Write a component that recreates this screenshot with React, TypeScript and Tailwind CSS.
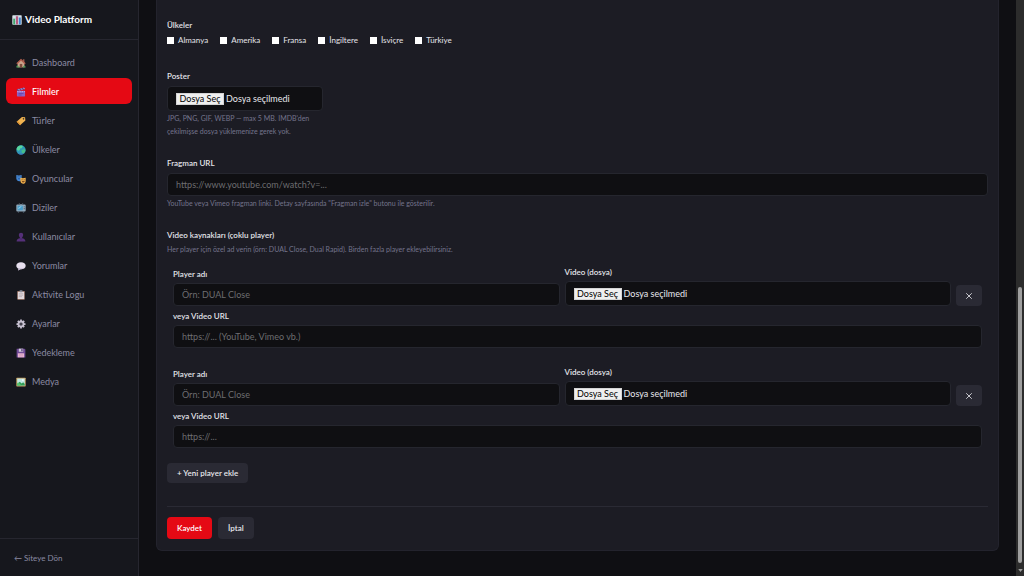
import { useState, type ReactNode } from "react";
import { X } from "lucide-react";

const icons: Record<string, ReactNode> = {
  chart: (
    <>
      <rect x="0.5" y="0.5" width="15" height="15" rx="1" fill="#d9e3ea" />
      <path d="M0.5 5.5h15M0.5 10.5h15M5.5 0.5v15M10.5 0.5v15" stroke="#aebfd0" strokeWidth="0.6" />
      <rect x="2" y="6" width="3" height="9" fill="#3fa66b" />
      <rect x="6.5" y="2" width="3" height="13" fill="#b6537a" />
      <rect x="11" y="4" width="3" height="11" fill="#3f86cf" />
    </>
  ),
  home: (
    <>
      <path d="M2.5 8h11v7h-11z" fill="#c9a58c" />
      <path d="M11 2h2.5v5H11z" fill="#9b5a4a" />
      <path d="M3 7 8 3l5 4v2H3z" fill="#c9a58c" />
      <path d="M8 1 15.5 8.5 14 10 8 4.5 2 10 0.5 8.5z" fill="#b4604f" />
      <path d="M6 9.5h4V15H6z" fill="#7c4c3c" />
      <path d="M0.5 15c0-4 3-4 3.5-1 1-1 2 0 2 1zM11 15c0-3 4.500-4 4.500 0z" fill="#4f9a58" />
    </>
  ),
  clapper: (
    <>
      <rect x="1.5" y="6" width="13" height="9" rx="1" fill="#8b62c6" />
      <path d="M1.5 3.500 13.800 0.800l.7 2.800L2.200 6.300z" fill="#5d4a9c" />
      <path d="m4 3 1.800 2.400M8 2.100l1.800 2.400M12 1.200l1.500 2.200" stroke="#e4d3f2" strokeWidth="1.2" />
      <path d="M2 7.500h12" stroke="#d7bcec" strokeWidth="1.5" strokeDasharray="2 1.5" />
      <path d="M4 10.500h8M4 12.800h5" stroke="#5a3c9b" strokeWidth="1" />
    </>
  ),
  tag: (
    <>
      <path d="M9.500 1.500 14.500 2l.5 5-8.500 7.800-5.500-5.500z" fill="#f0b350" />
      <path d="m1 9.300 5.500 5.500 1.500-1.400-5.500-5.500z" fill="#d98e31" />
      <circle cx="12" cy="4.5" r="1.3" fill="#3b2e25" />
    </>
  ),
  globe: (
    <>
      <circle cx="8" cy="8" r="7.5" fill="#2f9ab8" />
      <path d="M3 2.500C6 0 10 0.500 11 2L9 5 6.500 5.500 6 8 3.500 9 1 7c0-2 1-3.500 2-4.500z" fill="#58d69c" />
      <path d="M9 8l4-1.500 2 1.500c0 3-2 5-4 6l-2-2.500z" fill="#46bd88" />
      <path d="M2 12.500c3 4 9 4 12 0-3 2-9 2-12 0z" fill="#3f68b4" />
    </>
  ),
  masks: (
    <>
      <path d="M0.500 1.500c3 1 5 1 8.500 0v5.500c0 3-2 4.500-4 4.500s-4.500-2-4.500-4.500z" fill="#4688d4" />
      <path d="M2.500 4.500h1.500M5.800 4.500h1.500M3 8.200c1-1 2.500-1 3.500 0" stroke="#173a72" strokeWidth="1" fill="none" />
      <path d="M7 6c3 1 5 1 8.500 0v5c0 3-2 4.500-4 4.500S7 13.500 7 11z" fill="#eeb04c" />
      <path d="M9 9h1.500M12.300 9h1.500M9.500 11.800c1 1.500 3 1.500 4 0z" stroke="#6b3d1c" strokeWidth="1" fill="#6b3d1c" />
    </>
  ),
  tv: (
    <>
      <path d="m5 0.500 3 3 3-3" stroke="#8ba1b2" fill="none" />
      <rect x="0.5" y="2.5" width="15" height="11" rx="1.5" fill="#91a9bb" />
      <rect x="2.5" y="4.5" width="8.5" height="7" rx="1" fill="#499dca" />
      <path d="M3.500 8 7 5h2.500L4 10z" fill="#8ccce5" />
      <circle cx="13.2" cy="6" r="0.9" fill="#46586a" />
      <circle cx="13.2" cy="9" r="0.9" fill="#46586a" />
      <path d="M3 13.500h2v1.500H3zM11 13.500h2v1.500h-2z" fill="#607789" />
    </>
  ),
  user: (
    <>
      <path d="M4.500 4.500a3.500 3.500 0 0 1 7 0c0 2-.8 3.300-1.700 4.200v1.300c3 .4 5.200 1.700 5.200 5H1c0-3.300 2.200-4.600 5.200-5V8.700C5.300 7.800 4.500 6.500 4.500 4.500z" fill="#553079" />
      <path d="M6.200 10.500c1.200 1 2.400 1 3.600 0" stroke="#3e2160" fill="none" />
    </>
  ),
  speech: (
    <>
      <path d="M8 2c4.500 0 7.500 2.300 7.500 5.500S12.500 13 8 13l-1 0-3.500 2 .6-2.800C2 11.200.5 9.700.5 7.500.5 4.300 3.500 2 8 2z" fill="#e7dfee" />
      <path d="M2 10.500c2.500 2 9.500 2 12 0-1 2-5 3-7 2.500L3.500 15l.6-2.800z" fill="#bdafc9" />
    </>
  ),
  clipboard: (
    <>
      <rect x="2" y="1.5" width="12" height="14" rx="1" fill="#9a7465" />
      <rect x="3" y="3" width="10" height="11.5" fill="#e2d9dd" />
      <rect x="5.5" y="0.5" width="5" height="3" rx="1" fill="#8b8d99" />
      <path d="M4.500 6h7M4.500 8.300h7M4.500 10.600h5" stroke="#a3979f" strokeWidth="0.9" />
    </>
  ),
  gear: (
    <>
      <path d="M8 0.800v14.400M0.800 8h14.400M2.900 2.900l10.200 10.200M13.100 2.900 2.900 13.100" stroke="#c6c0d0" strokeWidth="2.8" />
      <circle cx="8" cy="8" r="4" fill="#202128" stroke="#c6c0d0" strokeWidth="3" />
      <circle cx="8" cy="8" r="1.2" fill="#77717f" />
    </>
  ),
  floppy: (
    <>
      <path d="M1 1h12.500L15 2.500V15H1z" fill="#6f4a96" />
      <rect x="4.5" y="1" width="7" height="5" fill="#d2cbdc" />
      <rect x="8.5" y="1.8" width="2" height="3.4" fill="#4d3170" />
      <rect x="3" y="8.5" width="10" height="6.5" fill="#e9b7d3" />
      <path d="M4.500 10.700h7M4.500 12.800h7" stroke="#bb82a7" strokeWidth="0.7" />
    </>
  ),
  picture: (
    <>
      <rect x="0.5" y="1" width="15" height="14" rx="1" fill="#c9a262" />
      <rect x="2" y="2.5" width="12" height="11" fill="#c1e7e4" />
      <path d="M2 11 6 7.500l3 3 2.500-2L14 11v2.500H2z" fill="#2f9e57" />
      <path d="M2 9.500c2-1 3 0 5 2l1 2H2z" fill="#56c46e" />
      <circle cx="11" cy="5" r="1.3" fill="#fff" />
    </>
  ),
};

const menu = [
  { icon: "home", label: "Dashboard" },
  { icon: "clapper", label: "Filmler" },
  { icon: "tag", label: "Türler" },
  { icon: "globe", label: "Ülkeler" },
  { icon: "masks", label: "Oyuncular" },
  { icon: "tv", label: "Diziler" },
  { icon: "user", label: "Kullanıcılar" },
  { icon: "speech", label: "Yorumlar" },
  { icon: "clipboard", label: "Aktivite Logu" },
  { icon: "gear", label: "Ayarlar" },
  { icon: "floppy", label: "Yedekleme" },
  { icon: "picture", label: "Medya" },
];

const countries = ["Almanya", "Amerika", "Fransa", "İngiltere", "İsviçre", "Türkiye"];

const labelClass = "block text-[8px] leading-3 font-semibold text-[#e4e4ea]";
const helpClass = "text-[7px] leading-[13px] text-[#74748c]";
const inputClass =
  "block h-[23px] w-full rounded border border-[#25262e] bg-[#0f0f12] px-2 text-[9px] text-[#e8e8ed] placeholder:text-[#6d6d70] outline-none focus:border-[#e50914]";

function Emoji({ name }: { name: string }) {
  return (
    <svg viewBox="0 0 16 16" className="size-[10px] shrink-0" aria-hidden="true">
      {icons[name]}
    </svg>
  );
}

function FileInput({ id, className = "" }: { id: string; className?: string }) {
  const [fileName, setFileName] = useState("Dosya seçilmedi");

  return (
    <label
      htmlFor={id}
      className={`relative flex h-[25px] items-center gap-[2px] rounded border border-[#25262e] bg-[#0f0f12] px-2 text-[9px] text-[#e8e8ed] ${className}`}
    >
      <input
        id={id}
        type="file"
        className="sr-only"
        onChange={(e) => setFileName(e.target.files?.[0]?.name ?? "Dosya seçilmedi")}
      />
      <span className="h-3 w-12 border border-[#d4d4d4] bg-[#efefef] text-center leading-[10px] text-black">
        Dosya Seç
      </span>
      <span>{fileName}</span>
    </label>
  );
}

function PlayerRow({ index, urlPlaceholder, onRemove }: { index: number; urlPlaceholder: string; onRemove: () => void }) {
  return (
    <div className="px-[6px]">
      <div className="grid grid-cols-[1fr_1fr_26px] items-end gap-[5px]">
        <div className="space-y-[3px]">
          <label htmlFor={`name-${index}`} className={labelClass}>Player adı</label>
          <input id={`name-${index}`} type="text" placeholder="Örn: DUAL Close" className={inputClass} />
        </div>
        <div className="space-y-[3px]">
          <label htmlFor={`file-${index}`} className={labelClass}>Video (dosya)</label>
          <FileInput id={`file-${index}`} />
        </div>
        <button
          type="button"
          aria-label="Player sil"
          onClick={onRemove}
          className="flex h-[21px] items-center justify-center rounded bg-[#2a2a34] text-[#e8e8ed]"
        >
          <X className="size-[10px]" strokeWidth={2} />
        </button>
      </div>
      <div className="mt-1 space-y-[3px]">
        <label htmlFor={`url-${index}`} className={labelClass}>veya Video URL</label>
        <input id={`url-${index}`} type="url" placeholder={urlPlaceholder} className={inputClass} />
      </div>
    </div>
  );
}

function Sidebar() {
  return (
    <aside className="flex w-[139px] shrink-0 flex-col border-r border-[#26262f] bg-[#16171d]">
      <div className="flex h-10 items-center gap-[3px] border-b border-[#26262f] px-3 text-[10px] font-bold text-white">
        <Emoji name="chart" />
        Video Platform
      </div>
      <nav className="flex flex-1 flex-col gap-[3px] px-[6px] pt-[9px]">
        {menu.map((item) => (
          <a
            key={item.label}
            href="#"
            className={`flex h-[26px] items-center gap-[6px] rounded-md px-[10px] pt-px text-[9px] ${
              item.label === "Filmler" ? "bg-[#e50914] font-medium text-white" : "text-[#8b8ba3]"
            }`}
          >
            <Emoji name={item.icon} />
            {item.label}
          </a>
        ))}
      </nav>
      <div className="flex h-[38px] items-center border-t border-[#26262f] px-[14px]">
        <a href="#" className="text-[8px] text-[#8b8ba3]">← Siteye Dön</a>
      </div>
    </aside>
  );
}

export default function App() {
  const [players, setPlayers] = useState([0, 1]);

  return (
    <div className="flex h-screen min-h-[576px] overflow-hidden bg-[#0f0f13] font-[Lato,sans-serif]">
      <Sidebar />
      <main className="min-w-0 flex-1 px-[17px]">
        <form className="rounded-b-md border border-t-0 border-[#23232d] bg-[#1c1c24] px-[10px] pt-[19px] pb-[11px]">
          <fieldset>
            <legend className={labelClass}>Ülkeler</legend>
            <div className="mt-[3px] flex h-3 items-center gap-3">
              {countries.map((country) => (
                <label key={country} className="flex items-center gap-1 text-[8px] text-[#e4e4ea]">
                  <input type="checkbox" className="size-[7px] appearance-none bg-white checked:bg-[#e50914]" />
                  {country}
                </label>
              ))}
            </div>
          </fieldset>

          <div className="mt-6">
            <label htmlFor="poster" className={labelClass}>Poster</label>
            <FileInput id="poster" className="mt-1 w-[156px]" />
            <p className={`mt-px w-[156px] ${helpClass}`}>
              JPG, PNG, GIF, WEBP — max 5 MB. IMDB'den çekilmişse dosya yüklemenize gerek yok.
            </p>
          </div>

          <div className="mt-[19px]">
            <label htmlFor="trailer" className={labelClass}>Fragman URL</label>
            <input id="trailer" type="url" placeholder="https://www.youtube.com/watch?v=..." className={`mt-1 ${inputClass}`} />
            <p className={`mt-px ${helpClass}`}>
              YouTube veya Vimeo fragman linki. Detay sayfasında "Fragman izle" butonu ile gösterilir.
            </p>
          </div>

          <fieldset className="mt-[19px]">
            <legend className={labelClass}>Video kaynakları (çoklu player)</legend>
            <p className={`mt-[2px] ${helpClass}`}>
              Her player için özel ad verin (örn: DUAL Close, Dual Rapid). Birden fazla player ekleyebilirsiniz.
            </p>
            <div className="mt-[10px] space-y-[18px]">
              {players.map((id, i) => (
                <PlayerRow
                  key={id}
                  index={id}
                  urlPlaceholder={i === 0 ? "https://... (YouTube, Vimeo vb.)" : "https://..."}
                  onRemove={() => setPlayers(players.filter((p) => p !== id))}
                />
              ))}
            </div>
            <button
              type="button"
              onClick={() => setPlayers([...players, Math.max(0, ...players) + 1])}
              className="mt-[15px] h-5 rounded bg-[#2a2a34] px-[10px] text-[8px] font-semibold text-[#e8e8ed]"
            >
              + Yeni player ekle
            </button>
          </fieldset>

          <div className="mt-[23px] flex gap-[6px] border-t border-[#2a2a34] pt-[10px]">
            <button type="submit" className="h-[22px] rounded bg-[#e50914] px-[10px] text-[8px] font-semibold text-white">
              Kaydet
            </button>
            <button type="button" className="h-[22px] rounded bg-[#2a2a34] px-[10px] text-[8px] font-semibold text-[#e8e8ed]">
              İptal
            </button>
          </div>
        </form>
      </main>
      {/* scroll track */}
      <div className="flex w-2 shrink-0 flex-col items-center justify-end bg-[#2c2c2c] pb-1" aria-hidden="true">
        <div className="h-[276px] w-1 rounded-full bg-[#9f9f9f]" />
        <svg viewBox="0 0 6 4" className="mt-[6px] h-[3px] w-[5px]">
          <path d="M0 0h6L3 4z" fill="#9f9f9f" />
        </svg>
      </div>
    </div>
  );
}
